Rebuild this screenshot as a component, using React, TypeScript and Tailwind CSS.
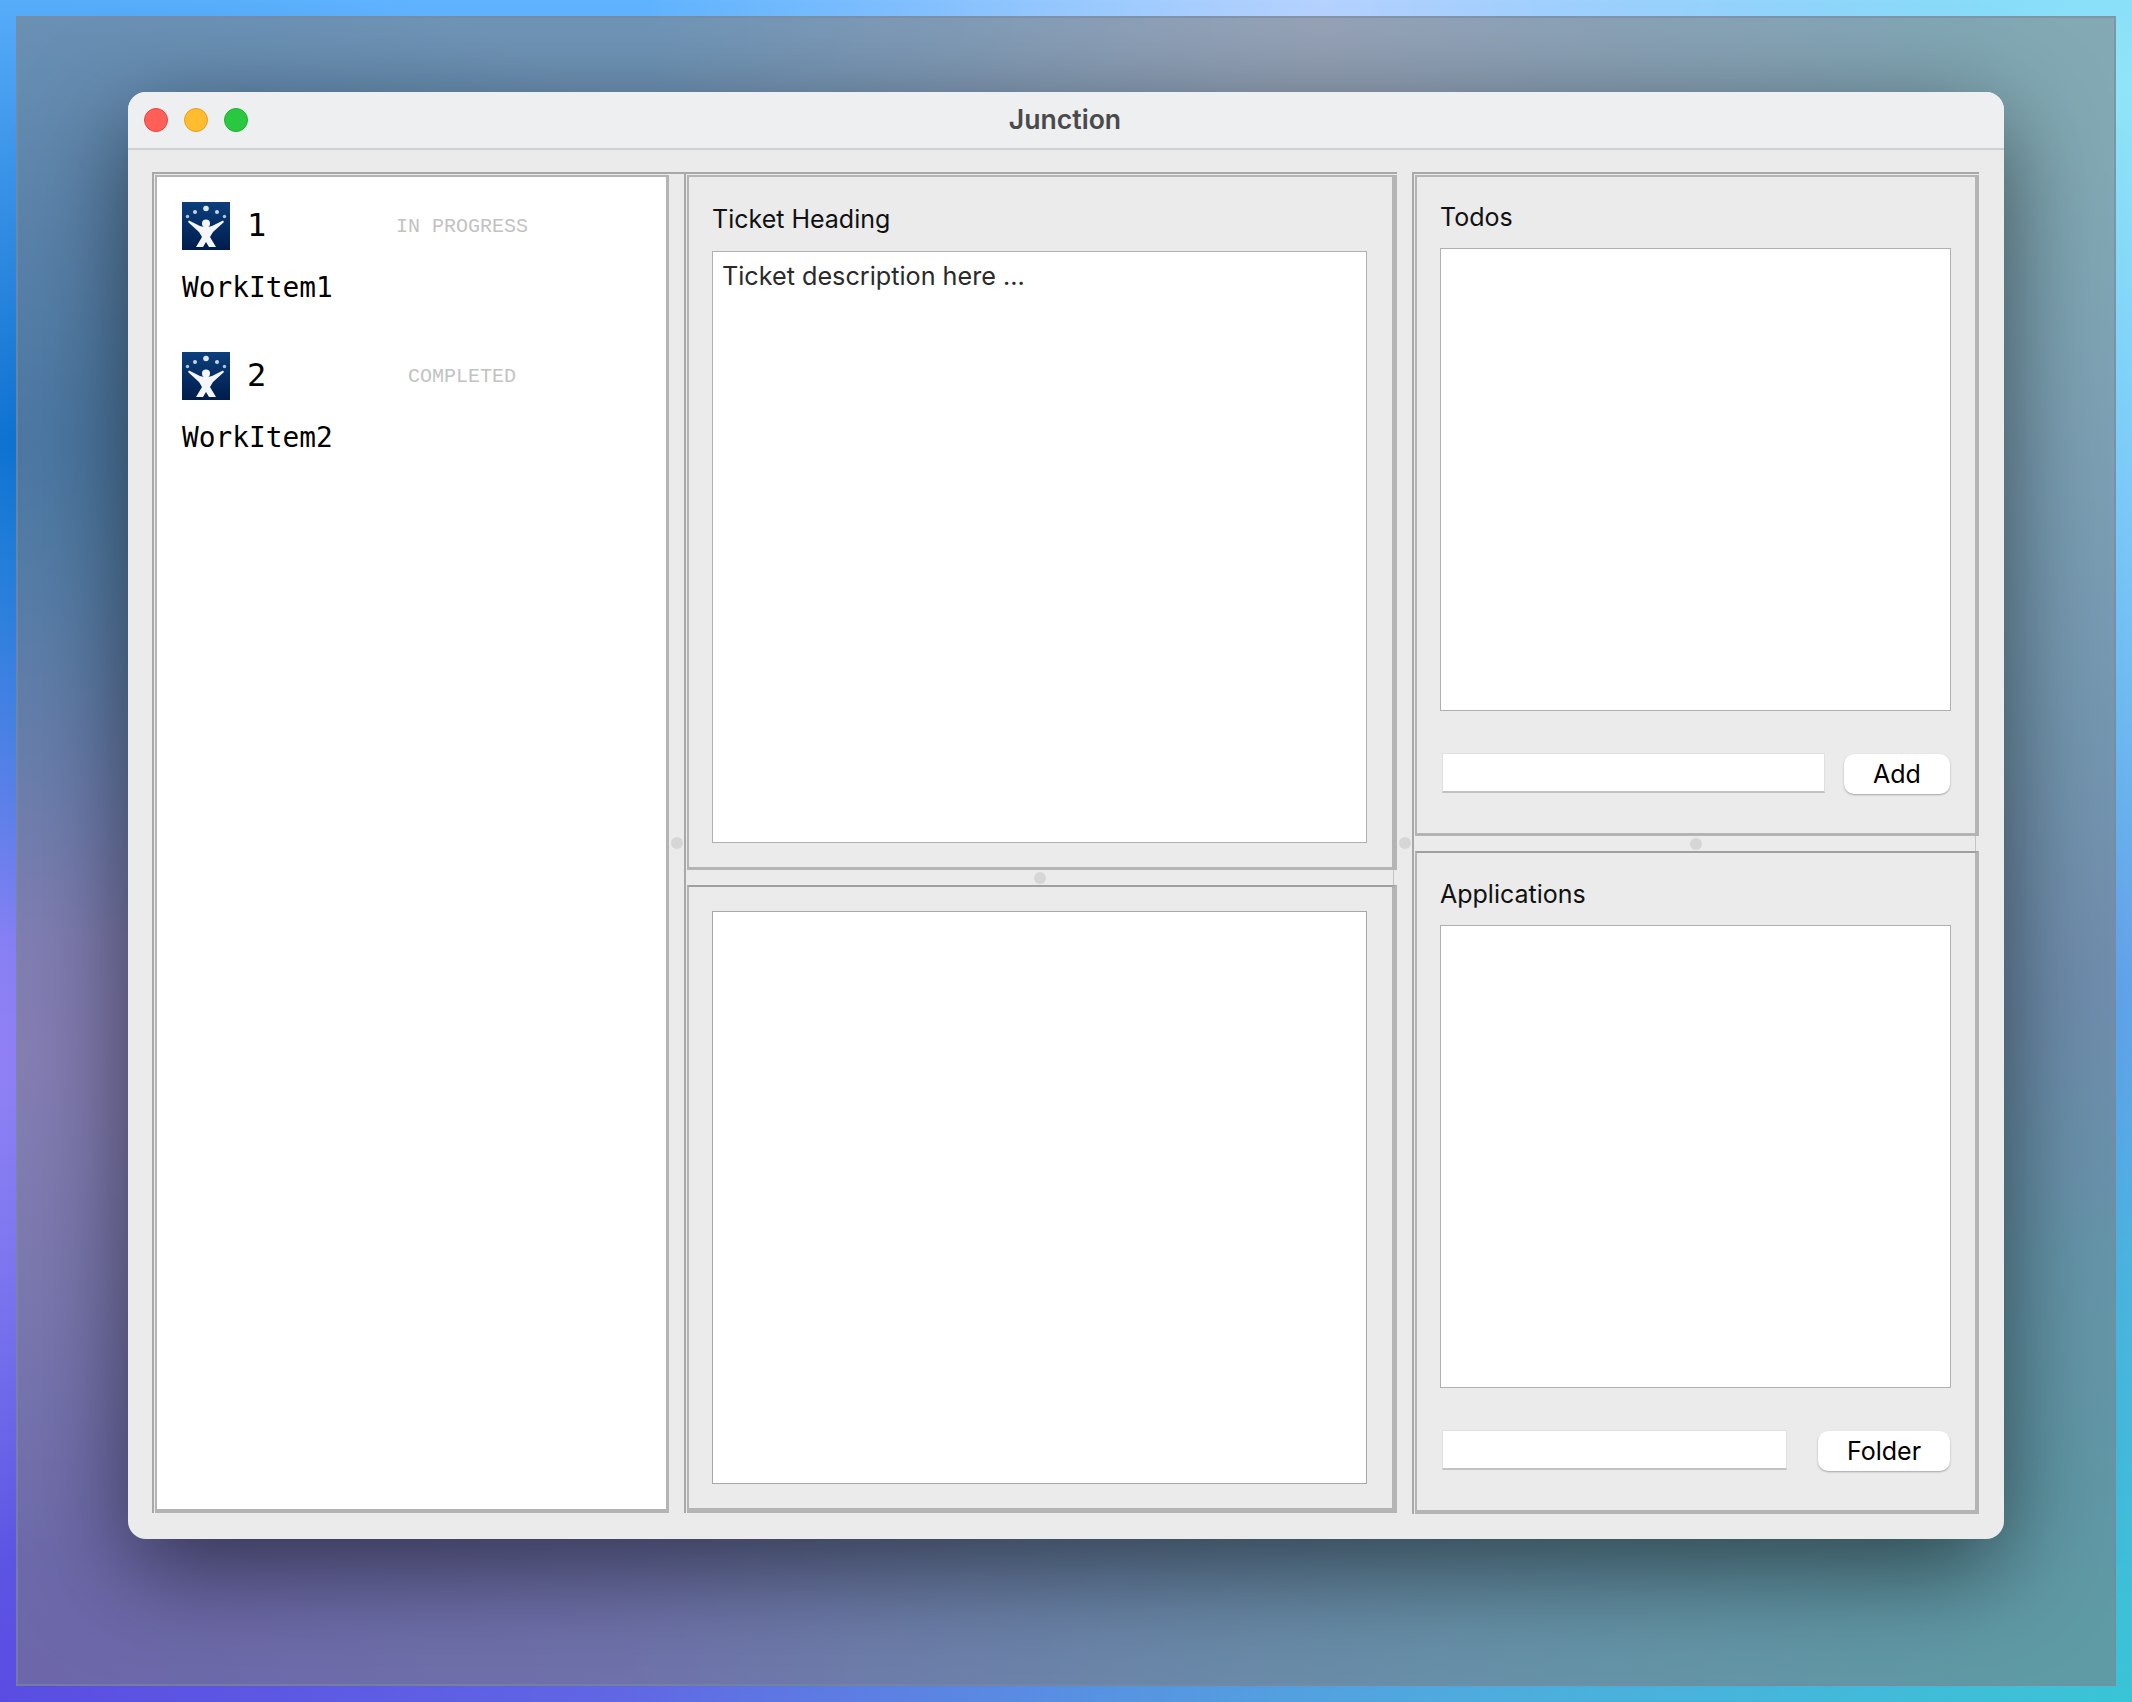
import type { ReactNode } from 'react';

const sans = "font-['Inter','Noto_Sans',sans-serif]";

const BlueIcon = () => (
  <svg viewBox="0 0 48 48" className="w-12 h-12 shrink-0">
    <defs>
      <linearGradient id="navy" x1="0" y1="0" x2="0" y2="1">
        <stop offset="0" stopColor="#0b3f7c" />
        <stop offset="1" stopColor="#011c4c" />
      </linearGradient>
    </defs>
    <rect width="48" height="48" fill="url(#navy)" />
    <circle cx="24" cy="6.5" r="2.8" fill="#dfe7f1" />
    <circle cx="13" cy="10" r="2" fill="#c8d4e4" />
    <circle cx="35" cy="10" r="2" fill="#c8d4e4" />
    <circle cx="5.5" cy="14.5" r="1.7" fill="#b4c4d8" />
    <circle cx="42.5" cy="14.5" r="1.7" fill="#b4c4d8" />
    <circle cx="24" cy="21.5" r="4" fill="#f4f6fa" />
    <path
      d="M7 18.5 L18 24 Q24 26 30 24 L41 18.5 L42 20 L31 30 L28 35 L34 45 L27 45 L24 40 L21 45 L14 45 L20 35 L17 30 L6 20 Z"
      fill="#f4f6fa"
    />
  </svg>
);

const Handle = ({ className }: { className: string }) => (
  <div className={`absolute w-3 h-3 rounded-full bg-[#d6d6d6] ${className}`} />
);

const WorkItem = ({ id, status, name }: { id: string; status: string; name: string }) => (
  <div className="h-[150px] flex flex-col">
    <div className="flex items-center h-12">
      <BlueIcon />
      <span className="ml-[17px] mb-[3px] w-[32px] text-[32px] leading-none text-black">{id}</span>
      <span className="ml-[33px] mt-[2px] w-[300px] text-center text-[20px] text-[#c2c2c2] font-['Liberation_Mono',monospace]">
        {status}
      </span>
    </div>
    <div className="mt-[21px] text-[27.8px] leading-[34px] text-black">{name}</div>
  </div>
);

// grey double rule on top and left comes from this wrapper plus the panels inside
const Column = ({ className, children }: { className: string; children: ReactNode }) => (
  <div className={`flex flex-col shrink-0 border-t-2 border-l-2 border-[#a8a8a8] pt-px pl-px ${className}`}>
    {children}
  </div>
);

const Field = ({ label, width, buttonWidth, className }: { label: string; width: string; buttonWidth: string; className: string }) => (
  <div className={`flex items-start justify-between pl-[2px] pr-px ${className}`}>
    <div className={`h-10 bg-white border border-[#e0e0e0] border-b-2 border-b-[#c2c2c2] ${width}`} />
    <button
      className={`h-10 mt-px rounded-[10px] bg-white text-[25px] leading-10 text-black shadow-[0_1px_2px_rgba(0,0,0,0.3)] ${buttonWidth}`}
    >
      {label}
    </button>
  </div>
);

export default function App() {
  return (
    <div className="w-[2132px] h-[1702px] p-4 overflow-hidden bg-[radial-gradient(ellipse_at_0%_26%,#0f72d0_0%,transparent_28%),radial-gradient(ellipse_at_0%_62%,#9180f5_0%,transparent_34%),radial-gradient(ellipse_at_62%_0%,#b6d2ff_0%,transparent_36%),radial-gradient(ellipse_at_100%_5%,#8ee4f8_0%,transparent_40%),radial-gradient(ellipse_at_100%_55%,#62a0e8_0%,transparent_24%),radial-gradient(ellipse_at_100%_100%,#39c4d6_0%,transparent_50%),radial-gradient(ellipse_at_0%_100%,#5a4ce2_0%,transparent_50%),linear-gradient(#60b4ff,#6a8ce8)]">
      <div className={`w-[2100px] h-[1670px] pt-[74px] pl-[110px] border-2 border-[#7c8ba0]/60 bg-[#7c7c7c]/55 ${sans}`}>
        <div className="w-[1876px] h-[1447px] rounded-[18px] overflow-hidden flex flex-col bg-[#ebebeb] shadow-[0_30px_100px_rgba(0,0,0,0.55)]">
          {/* title bar */}
          <div className="relative h-[58px] shrink-0 flex items-center justify-center bg-[#eeeff1] border-b-2 border-[#cfcfcf]">
            <div className="absolute left-4 top-4 flex gap-4">
              <span className="w-6 h-6 rounded-full bg-[#ff5f57] border border-[#e2463f]" />
              <span className="w-6 h-6 rounded-full bg-[#febc2e] border border-[#dfa023]" />
              <span className="w-6 h-6 rounded-full bg-[#28c840] border border-[#1fb032]" />
            </div>
            <span className="-ml-[2px] text-[26.6px] font-semibold text-[#4a4a4a]">Junction</span>
          </div>

          <div className="flex pl-6 pt-[22px] h-[1389px]">
            {/* work items */}
            <Column className="w-[517px] h-[1341px]">
              <div className="flex-1 border-t-2 border-l-2 border-r-[3px] border-b-[4px] border-[#b4b4b4] bg-white pt-[25px] pl-[25px] font-['DejaVu_Sans_Mono',monospace]">
                <WorkItem id="1" status="IN PROGRESS" name="WorkItem1" />
                <WorkItem id="2" status="COMPLETED" name="WorkItem2" />
              </div>
            </Column>

            {/* splitter */}
            <div className="relative w-[15px] h-[1340px] shrink-0 border-t-2 border-[#a8a8a8]">
              <Handle className="left-[2px] top-[663px]" />
            </div>

            {/* ticket */}
            <Column className="w-[713px] h-[1341px]">
              <div className="h-[695px] flex flex-col border-t-2 border-l-2 border-r-[5px] border-b-[3px] border-[#b4b4b4] pl-[23px] pt-6">
                <div className="text-[25px] leading-9 text-[#111]">Ticket Heading</div>
                <div className="mt-[14px] w-[655px] h-[592px] bg-white border border-[#b0b0b0] pl-[9px] pt-[6px] text-[25.2px] leading-9 text-[#2a2a2a]">
                  Ticket description here ...
                </div>
              </div>
              <div className="relative h-[15px] mr-[3px] border-r border-[#c4c4c4]">
                <Handle className="left-[347px] top-[2px]" />
              </div>
              <div className="flex-1 border-t-2 border-t-[#a0a0a0] border-l-2 border-r-[5px] border-b-[5px] border-[#b4b4b4] pl-[23px] pt-6">
                <div className="w-[655px] h-[573px] bg-white border border-[#a8a8a8]" />
              </div>
            </Column>

            {/* splitter */}
            <div className="relative w-[15px] h-[1340px] shrink-0">
              <Handle className="left-[2px] top-[665px]" />
            </div>

            {/* right column */}
            <Column className="w-[567px] h-[1342px]">
              <div className="h-[661px] flex flex-col border-t-2 border-l-2 border-r-[4px] border-b-[3px] border-[#b4b4b4] pl-[23px] pr-6 pt-[22px]">
                <div className="text-[25px] leading-9 text-[#111]">Todos</div>
                <div className="mt-[13px] h-[463px] bg-white border border-[#b0b0b0]" />
                <Field label="Add" width="w-[383px]" buttonWidth="w-[106px]" className="mt-[42px]" />
              </div>
              <div className="relative h-[15px] mr-[3px] border-r border-[#c4c4c4]">
                <Handle className="left-[275px] top-[2px]" />
              </div>
              <div className="flex-1 flex flex-col border-t-2 border-t-[#a0a0a0] border-l-2 border-r-[4px] border-b-[4px] border-[#b4b4b4] pl-[23px] pr-6 pt-[23px]">
                <div className="text-[25px] leading-9 text-[#111]">Applications</div>
                <div className="mt-[13px] h-[463px] bg-white border border-[#b0b0b0]" />
                <Field label="Folder" width="w-[345px]" buttonWidth="w-[132px]" className="mt-[42px]" />
              </div>
            </Column>
          </div>
        </div>
      </div>
    </div>
  );
}
